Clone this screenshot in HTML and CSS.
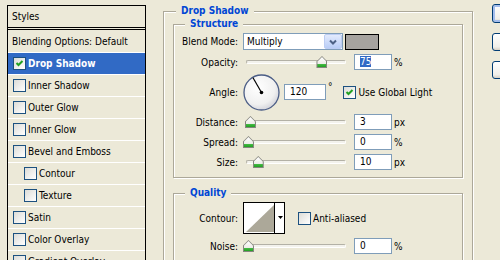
FILE: index.html
```html
<!DOCTYPE html>
<html lang="en">
<head>
    <meta charset="UTF-8">
    <title>Layer Style - Drop Shadow</title>
    <link rel="stylesheet" href="styles.css">
</head>
<body>
    <div class="dialog">
        <div class="styles-list">
            <div class="list-head">Styles</div>
            <div class="list-row first">Blending Options: Default</div>
            <div class="list-row selected on">
                <span class="check"><svg width="11" height="11" viewBox="0 0 11 11"><path d="M2.5 5 L4.5 7 L8.5 3" fill="none" stroke="#21a121" stroke-width="2"/></svg></span>Drop Shadow
            </div>
            <div class="list-row"><span class="check"></span>Inner Shadow</div>
            <div class="list-row"><span class="check"></span>Outer Glow</div>
            <div class="list-row"><span class="check"></span>Inner Glow</div>
            <div class="list-row"><span class="check"></span>Bevel and Emboss</div>
            <div class="list-row sub"><span class="check"></span>Contour</div>
            <div class="list-row sub"><span class="check"></span>Texture</div>
            <div class="list-row"><span class="check"></span>Satin</div>
            <div class="list-row"><span class="check"></span>Color Overlay</div>
            <div class="list-row"><span class="check"></span>Gradient Overlay</div>
        </div>

        <div class="group effect">
            <div class="group-title">Drop Shadow</div>

            <div class="group structure">
                <div class="group-title">Structure</div>

                <div class="row blend">
                    <span class="lbl">Blend Mode:</span>
                    <div class="select">
                        <span class="select-text">Multiply</span>
                        <span class="select-btn"><svg width="16" height="14" viewBox="0 0 16 14"><path d="M5 5.5 L8 8.5 L11 5.5" fill="none" stroke="#4d6185" stroke-width="2"/></svg></span>
                    </div>
                    <span class="swatch"></span>
                </div>

                <div class="row">
                    <span class="lbl">Opacity:</span>
                    <div class="slider"><span class="thumb" style="left: 76%"></span></div>
                    <span class="field"><span class="sel">75</span></span>
                    <span class="unit">%</span>
                </div>

                <div class="row angle">
                    <span class="lbl">Angle:</span>
                    <svg class="dial" width="37" height="37" viewBox="0 0 37 37">
                        <defs>
                            <radialGradient id="dialFill" cx="40%" cy="35%" r="70%">
                                <stop offset="0" stop-color="#ffffff"/>
                                <stop offset="0.7" stop-color="#f0f0f0"/>
                                <stop offset="1" stop-color="#cfd0d8"/>
                            </radialGradient>
                        </defs>
                        <circle cx="18.5" cy="18.5" r="17.5" fill="url(#dialFill)" stroke="#4b5d86" stroke-width="1.3"/>
                        <line x1="18.5" y1="18.5" x2="10" y2="3.8" stroke="#000" stroke-width="1.2"/>
                        <circle cx="18.5" cy="18.5" r="1.8" fill="#000"/>
                    </svg>
                    <span class="field wide">120</span>
                    <span class="deg">°</span>
                    <span class="option global">
                        <span class="check"><svg width="11" height="11" viewBox="0 0 11 11"><path d="M2.5 5 L4.5 7 L8.5 3" fill="none" stroke="#21a121" stroke-width="2"/></svg></span>Use Global Light
                    </span>
                </div>

                <div class="row">
                    <span class="lbl">Distance:</span>
                    <div class="slider"><span class="thumb" style="left: 3%"></span></div>
                    <span class="field">3</span>
                    <span class="unit">px</span>
                </div>

                <div class="row">
                    <span class="lbl">Spread:</span>
                    <div class="slider"><span class="thumb" style="left: 1%"></span></div>
                    <span class="field">0</span>
                    <span class="unit">%</span>
                </div>

                <div class="row">
                    <span class="lbl">Size:</span>
                    <div class="slider"><span class="thumb" style="left: 11%"></span></div>
                    <span class="field">10</span>
                    <span class="unit">px</span>
                </div>
            </div>

            <div class="group quality">
                <div class="group-title">Quality</div>

                <div class="row contour-row">
                    <span class="lbl">Contour:</span>
                    <svg class="contour" width="42" height="32" viewBox="0 0 42 32">
                        <rect x="0.5" y="0.5" width="41" height="31" fill="#fff" stroke="#000"/>
                        <path d="M3 30 L31 3 V30 Z" fill="#aca899"/>
                        <path d="M31.5 1 V31" stroke="#000"/>
                        <path d="M35 14 H40 L37.5 17 Z" fill="#000"/>
                    </svg>
                    <span class="option anti"><span class="check"></span>Anti-aliased</span>
                </div>

                <div class="row">
                    <span class="lbl">Noise:</span>
                    <div class="slider"><span class="thumb" style="left: 1%"></span></div>
                    <span class="field">0</span>
                    <span class="unit">%</span>
                </div>
            </div>
        </div>

        <!-- dialog buttons, only their left edges are in view -->
        <div class="buttons">
            <button class="default" aria-label="OK"></button>
            <button aria-label="Cancel"></button>
            <button aria-label="New Style"></button>
        </div>
    </div>
</body>
</html>
```

FILE: styles.css
```css
body { margin: 0; background: #ece9d8; font-family: "DejaVu Sans Condensed", "DejaVu Sans", sans-serif; font-stretch: condensed; font-size: 10px; color: #000; overflow: hidden; }
.dialog { display: flex; align-items: flex-start; padding: 5px 0 0 7px; height: 255px; }

/* styles list */
.styles-list { flex: none; width: 137px; height: 260px; border: 1px solid #000; border-bottom: none; }
.list-head { height: 21px; line-height: 21px; padding-left: 4px; border-bottom: 3px double #000; }
.list-row { display: flex; align-items: center; height: 21px; padding-left: 5px; border-bottom: 1px solid #fff; white-space: nowrap; }
.list-row.first { height: 22px; padding-left: 4px; }
.list-row.sub { padding-left: 16px; }
.list-row.selected { background: #316ac5; color: #fff; }
.list-row.on { font-weight: bold; }
.list-row .check { margin-right: 2px; }

/* checkbox */
.check { flex: none; display: inline-flex; align-items: center; justify-content: center; width: 13px; height: 13px; box-sizing: border-box; border: 1px solid #1c5180; background: linear-gradient(135deg, #dcdcd7, #ffffff); }

/* etched group boxes */
.group { position: relative; box-sizing: border-box; border: 1px solid #aca899; box-shadow: inset 1px 1px 0 #fff, 1px 1px 0 #fff; }
.group-title { position: absolute; top: -7px; left: 12px; padding: 0 5px; line-height: 12px; background: #ece9d8; color: #0046d5; font-weight: bold; white-space: nowrap; }
.effect { flex: none; width: 310px; height: 260px; margin: 6px 0 0 17px; padding: 12px 9px 0 9px; border-bottom: none; }
.structure, .quality { width: 290px; padding-top: 8px; }
.structure .group-title, .quality .group-title { left: 11px; }
.structure { padding-bottom: 7px; }
.quality { margin-top: 15px; height: 80px; border-bottom: none; }

/* rows */
.row { display: flex; align-items: center; height: 16px; margin-bottom: 4px; white-space: nowrap; }
.row:last-child { margin-bottom: 0; }
.row.blend { height: 17px; }
.row.angle { height: 38px; margin: -1px 0 3px; }
.row.contour-row { height: 32px; }
.lbl { flex: none; width: 64px; text-align: right; }

.select { display: flex; align-items: center; box-sizing: border-box; width: 100px; height: 17px; margin-left: 5px; border: 1px solid #7f9db9; background: #fff; }
.select-text { flex: 1; padding-left: 3px; }
.select-btn { display: flex; align-items: center; justify-content: center; box-sizing: border-box; width: 18px; height: 15px; border: 1px solid #bccdf3; border-radius: 2px; background: linear-gradient(#e3ebfd, #b9cdf7); }
.swatch { width: 34px; height: 16px; margin-left: 2px; box-sizing: border-box; border: 1px solid #000; background: #a6a39f; }

.slider { position: relative; box-sizing: border-box; width: 100px; height: 4px; margin-left: 8px; border: 1px solid #b3b1a6; border-right-color: #fff; border-bottom-color: #fff; border-radius: 2px; background: #f3f2ec; }
.thumb { position: absolute; top: -5px; width: 11px; height: 12px; margin-left: -5px; }
.thumb::before { content: ""; position: absolute; inset: 0; clip-path: polygon(50% 0, 100% 45%, 100% 100%, 0 100%, 0 45%); background: #85857e; }
.thumb::after { content: ""; position: absolute; left: 1px; right: 1px; top: 1px; bottom: 1px; clip-path: polygon(50% 0, 100% 45%, 100% 100%, 0 100%, 0 45%); background: linear-gradient(#ffffff, #ecebe6 70%, #44b944 72%, #21a121); }

.field { box-sizing: border-box; width: 38px; height: 16px; margin-left: 8px; padding-left: 5px; line-height: 14px; border: 1px solid #7f9db9; background: #fff; }
.field.wide { width: 42px; margin-left: 4px; }
.sel { background: #316ac5; color: #fff; }
.unit { margin-left: 2px; }

.dial { flex: none; margin-left: 5px; }
.deg { align-self: flex-start; margin: 8px 0 0 2px; }
.option { display: flex; align-items: center; }
.option .check { margin-right: 3px; }
.global { margin-left: 10px; }
.contour { flex: none; margin-left: 5px; }
.anti { margin-left: 13px; }
.anti .check { margin-right: 2px; }

/* dialog buttons */
.buttons { flex: none; display: flex; flex-direction: column; margin: -1px 0 0 19px; }
button { width: 75px; height: 18px; margin-bottom: 10px; padding: 0; border: 1px solid #003c74; border-radius: 3px; background: linear-gradient(#ffffff, #f0efea 80%, #d6d0c5); font: inherit; }
button.default { height: 19px; box-shadow: inset 0 0 0 2px #a4bdec; }
```
